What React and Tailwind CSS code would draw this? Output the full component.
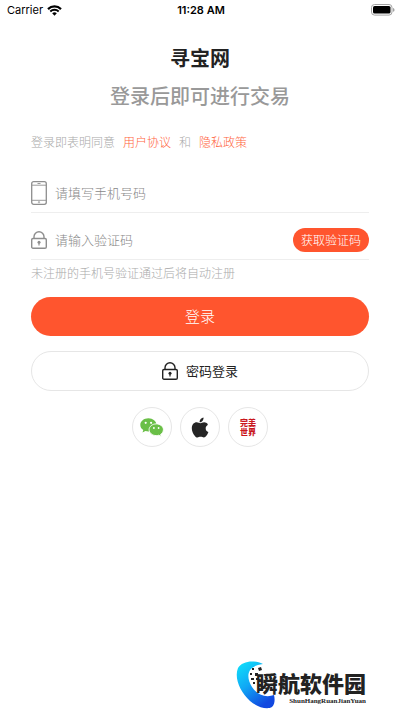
import { useState } from "react";

const WifiIcon = () => (
    <svg width="15" height="11" viewBox="0 0 15 11" aria-hidden="true">
        <path d="M1 4.1a9.3 9.3 0 0 1 13 0" fill="none" stroke="#000" strokeWidth="2.2" />
        <path d="M3.3 6.5a6 6 0 0 1 8.4 0" fill="none" stroke="#000" strokeWidth="1.9" />
        <path d="M5.2 8.3a3.3 3.3 0 0 1 4.6 0L7.5 10.7z" fill="#000" />
    </svg>
);

const BatteryIcon = () => (
    <svg width="24" height="12" viewBox="0 0 24 12" aria-hidden="true">
        <rect x="0.5" y="0.5" width="20.5" height="10.6" rx="3" fill="#fff" stroke="#a3a3a3" />
        <rect x="2" y="2" width="17.5" height="7.6" rx="1.6" fill="#000" />
        <path d="M22 4v3.8c1-.3 1.5-1 1.5-1.9S23 4.3 22 4z" fill="#a3a3a3" />
    </svg>
);

const PhoneIcon = () => (
    <svg width="16" height="24" viewBox="0 0 16 24" fill="none" stroke="#8e8e8e" aria-hidden="true">
        <rect x="0.7" y="0.7" width="14.6" height="22.6" rx="2" strokeWidth="1.3" />
        <path d="M1 4.2h14M1 19.3h14" strokeWidth="0.9" />
        <path d="M6.5 2.5h3" strokeWidth="0.9" />
        <circle cx="8" cy="21.2" r="0.7" strokeWidth="0.7" />
    </svg>
);

const LockIcon = ({ color }) => (
    <svg width="16" height="18" viewBox="0 0 16 18" fill="none" stroke={color} aria-hidden="true">
        <rect x="0.7" y="7.5" width="14.6" height="9.7" rx="1.3" strokeWidth="1.4" />
        <path d="M3 7.5V5.8a5 5 0 0 1 10 0v1.7" strokeWidth="1.4" />
        <circle cx="8" cy="11.2" r="1.5" fill={color} stroke="none" />
        <path d="M8 11.5v3" strokeWidth="1.2" />
    </svg>
);

const WechatIcon = () => (
    <svg width="24" height="19" viewBox="0 0 24 19" aria-hidden="true">
        <path d="M8.4.3C3.9.3.3 3.2.3 6.9c0 2.1 1.2 3.9 3 5.1l-.8 2.5L5.4 13c1 .3 2 .4 3 .4 4.5 0 8.1-2.9 8.1-6.5S12.900.3 8.400.3z" fill="#6abf47" />
        <path d="M16.3 5.9c-4 0-7.2 2.6-7.2 5.8s3.2 5.9 7.2 5.9c.9 0 1.7-.1 2.5-.4l2.5 1.3-.7-2.1c1.7-1.1 2.8-2.8 2.8-4.7 0-3.200-3.200-5.800-7.100-5.800z" fill="#6abf47" stroke="#fff" strokeWidth="0.9" />
        <g fill="#fff">
            <circle cx="5.7" cy="4.8" r="1.1" />
            <circle cx="11.1" cy="4.8" r="1.1" />
            <circle cx="13.9" cy="10" r="0.9" />
            <circle cx="18.6" cy="10" r="0.9" />
        </g>
    </svg>
);

const AppleIcon = () => (
    <svg width="18" height="21" viewBox="0 0 18 21" fill="#252525" aria-hidden="true">
        <path d="M12.5.5c.2 1.3-.3 2.5-1.1 3.4-.8.9-1.9 1.4-2.8 1.3-.1-1.2.4-2.3 1.1-3.2.8-.9 1.9-1.4 2.8-1.5z" />
        <path d="M16.7 8c-1.300.8-2 1.900-2 3.400 0 1.700 1 3.100 2.700 3.700-.5 1.500-1.300 2.900-2.200 4-.7.900-1.400 1.400-2.300 1.400-1.200 0-1.800-.7-3.300-.7-1.400 0-2.100.7-3.200.7-.9 0-1.700-.6-2.500-1.600C2 16.900.8 13.900.8 11.300c0-3.700 2.200-6 4.900-6 1.500 0 2.700.9 3.600.9.900 0 2.200-1 3.900-1 1.400 0 2.700.7 3.500 1.900z" />
    </svg>
);

const SwooshIcon = () => (
    <svg width="50" height="50" viewBox="0 0 50 50" aria-hidden="true">
        <defs>
            <linearGradient id="swoosh" x1="0" y1="0" x2="0.6" y2="1">
                <stop offset="0" stopColor="#10e4fa" />
                <stop offset="0.5" stopColor="#10a8f5" />
                <stop offset="1" stopColor="#1148e0" />
            </linearGradient>
        </defs>
        <path d="M27 4C18-.5 6 1 2 8c-4 10 2 24 12 33 7 6 17 9 22 6 3-3 3-8 2-12-8 3-17 0-22-8C10 17 10 6 27 4z" fill="url(#swoosh)" />
        <path d="M16 8h2v2h-2zM22 8l3-1 1 3-3 1zM14 13h2v2h-2zM19 13h3v3h-3zM15 18h3v2h-3zM20 18h2v2h-2zM17 22h2v2h-2z" fill="#222" />
    </svg>
);

const App = () => {
    const [telefono, setTelefono] = useState("");
    const [codigo, setCodigo] = useState("");

    return (
        <div className="flex min-h-screen flex-col bg-white font-['Noto_Sans_CJK_SC',sans-serif] text-[#222]">
            <header className="grid h-5 grid-cols-3 items-center pr-[5px] pl-[7px] font-[Inter,sans-serif] text-[11px] text-black">
                <div className="flex items-center gap-1">
                    <span>Carrier</span>
                    <WifiIcon />
                </div>
                <span className="text-center font-semibold">11:28 AM</span>
                <div className="flex justify-end">
                    <BatteryIcon />
                </div>
            </header>

            <main className="px-[31px] pt-6">
                <h1 className="text-center text-xl leading-7 font-bold">寻宝网</h1>
                <p className="mt-[10px] text-center text-xl leading-7 font-medium text-[#999]">登录后即可进行交易</p>

                <p className="mt-[22px] flex gap-2 text-xs leading-5 font-light text-[#aaa]">
                    <span>登录即表明同意</span>
                    <a href="#user" className="text-[#ff6540]">用户协议</a>
                    <span>和</span>
                    <a href="#privacy" className="text-[#ff6540]">隐私政策</a>
                </p>

                <form onSubmit={(e) => e.preventDefault()}>
                    <div className="mt-[21px] flex h-10 items-center gap-2 border-b border-[#eee]">
                        <label htmlFor="telefono"><PhoneIcon /></label>
                        <input
                            id="telefono"
                            type="tel"
                            aria-label="手机号码"
                            placeholder="请填写手机号码"
                            value={telefono}
                            onChange={(e) => setTelefono(e.target.value)}
                            className="min-w-0 flex-1 text-[13px] font-light outline-none placeholder:text-[#888]"
                        />
                    </div>
                    <div className="mt-[7px] flex h-10 items-center gap-2 border-b border-[#eee]">
                        <label htmlFor="codigo"><LockIcon color="#8e8e8e" /></label>
                        <input
                            id="codigo"
                            type="text"
                            aria-label="验证码"
                            placeholder="请输入验证码"
                            value={codigo}
                            onChange={(e) => setCodigo(e.target.value)}
                            className="min-w-0 flex-1 text-[13px] font-light outline-none placeholder:text-[#888]"
                        />
                        <button type="button" className="h-6 rounded-full bg-[#ff552e] px-2 text-xs font-light text-white">
                            获取验证码
                        </button>
                    </div>
                    <p className="mt-[3px] text-xs leading-5 font-light text-[#aaa]">未注册的手机号验证通过后将自动注册</p>

                    <button type="submit" className="mt-[14px] h-[39px] w-full rounded-full bg-[#ff552e] text-[15px] font-light text-white">
                        登录
                    </button>
                    <button type="button" className="mt-[15px] flex h-10 w-full items-center justify-center gap-2 rounded-full border border-[#e6e6e6] text-[13px]">
                        <LockIcon color="#222" />
                        密码登录
                    </button>
                </form>

                <div className="mt-4 flex justify-center gap-2">
                    <button aria-label="微信登录" className="flex size-10 items-center justify-center rounded-full border border-[#e6e6e6]">
                        <WechatIcon />
                    </button>
                    <button aria-label="Apple" className="flex size-10 items-center justify-center rounded-full border border-[#e6e6e6]">
                        <AppleIcon />
                    </button>
                    <button className="flex size-10 items-center justify-center rounded-full border border-[#e6e6e6] text-[8px] leading-[9px] font-black text-[#c9161d]">
                        <span className="w-4 break-all">完美世界</span>
                    </button>
                </div>
            </main>

            <footer className="mt-auto flex justify-end pr-[34px]">
                <div className="relative pl-5">
                    <div className="absolute top-0 left-0"><SwooshIcon /></div>
                    <div className="relative flex h-[50px] flex-col items-end pt-[7px]">
                        <span className="text-[22px] leading-[30px] font-black">瞬航软件园</span>
                        <span className="font-['Liberation_Serif',serif] text-[7px] leading-2 font-bold">ShunHangRuanJianYuan</span>
                    </div>
                </div>
            </footer>
        </div>
    );
};

export default App;
